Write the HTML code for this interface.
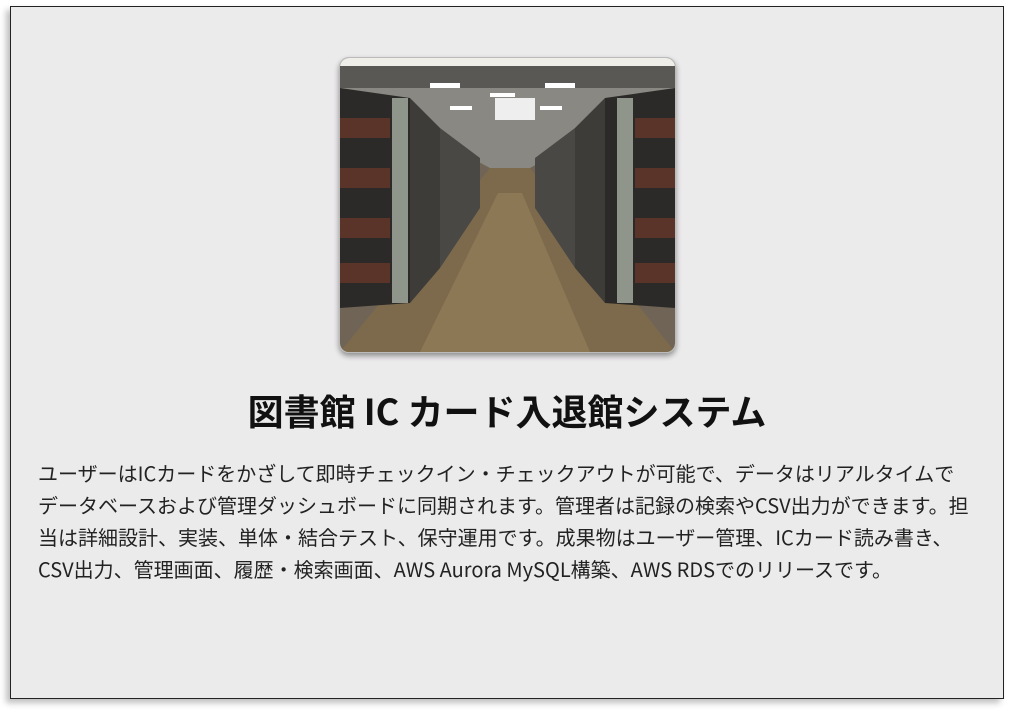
<!DOCTYPE html>
<html><head><meta charset="utf-8"><style>
html,body{margin:0;padding:0;background:#fff;width:1014px;height:713px;overflow:hidden}
.card{position:absolute;left:10px;top:6px;width:992px;height:691px;border:1px solid #222;background:#ecebec;box-shadow:-4px 4px 6px rgba(0,0,0,.25)}
.img{position:absolute;left:328px;top:50px;width:335px;height:294px;border-radius:10px;overflow:hidden;box-shadow:0 3px 6px rgba(0,0,0,.4);border:1px solid #bbb}
h1{position:absolute;left:0;width:992px;top:383px;margin:0;text-align:center;font:bold 36px/40px "Noto Sans CJK JP","Liberation Sans",sans-serif;color:#111}
.p{position:absolute;left:27px;top:450px;font:20px/32px "Noto Sans CJK JP","Liberation Sans",sans-serif;color:#222;white-space:nowrap}
</style></head><body>
<div class="card">
<div class="img"><svg width="335" height="294" viewBox="0 0 335 294">
<rect width="335" height="294" fill="#6f6455"/>
<rect width="335" height="40" fill="#5a5854"/>
<polygon points="0,30 335,30 190,110 150,110" fill="#8a8882"/>
<polygon points="150,110 190,110 335,294 0,294" fill="#7d6a4c"/>
<polygon points="158,135 182,135 250,294 80,294" fill="#8c7855"/>
<polygon points="0,30 70,40 70,245 0,250" fill="#2c2a28"/>
<polygon points="70,40 100,70 100,210 70,245" fill="#3e3c38"/>
<polygon points="100,70 140,100 140,150 100,210" fill="#4a4844"/>
<polygon points="335,30 265,40 265,245 335,250" fill="#2c2a28"/>
<polygon points="265,40 235,70 235,210 265,245" fill="#3e3c38"/>
<polygon points="235,70 195,100 195,150 235,210" fill="#4a4844"/>
<rect x="52" y="40" width="16" height="205" fill="#8f958a"/>
<rect x="277" y="40" width="16" height="205" fill="#8f958a"/>
<g fill="#7a3a2a" opacity=".6"><rect x="0" y="60" width="50" height="20"/><rect x="0" y="110" width="50" height="20"/><rect x="0" y="160" width="50" height="20"/><rect x="0" y="205" width="50" height="20"/><rect x="295" y="60" width="40" height="20"/><rect x="295" y="110" width="40" height="20"/><rect x="295" y="160" width="40" height="20"/><rect x="295" y="205" width="40" height="20"/></g>
<g fill="#fff"><rect x="90" y="25" width="30" height="5"/><rect x="205" y="25" width="30" height="5"/><rect x="150" y="35" width="25" height="4"/><rect x="110" y="48" width="22" height="4"/><rect x="200" y="48" width="22" height="4"/><rect x="0" y="0" width="335" height="8" fill="#f0eee8"/></g>
<rect x="155" y="40" width="40" height="22" fill="#eee"/>
</svg></div>
<h1>図書館 IC カード入退館システム</h1>
<div class="p">ユーザーはICカードをかざして即時チェックイン・チェックアウトが可能で、データはリアルタイムで<br>データベースおよび管理ダッシュボードに同期されます。管理者は記録の検索やCSV出力ができます。担<br>当は詳細設計、実装、単体・結合テスト、保守運用です。成果物はユーザー管理、ICカード読み書き、<br>CSV出力、管理画面、履歴・検索画面、AWS Aurora MySQL構築、AWS RDSでのリリースです。</div>
</div>
</body></html>
